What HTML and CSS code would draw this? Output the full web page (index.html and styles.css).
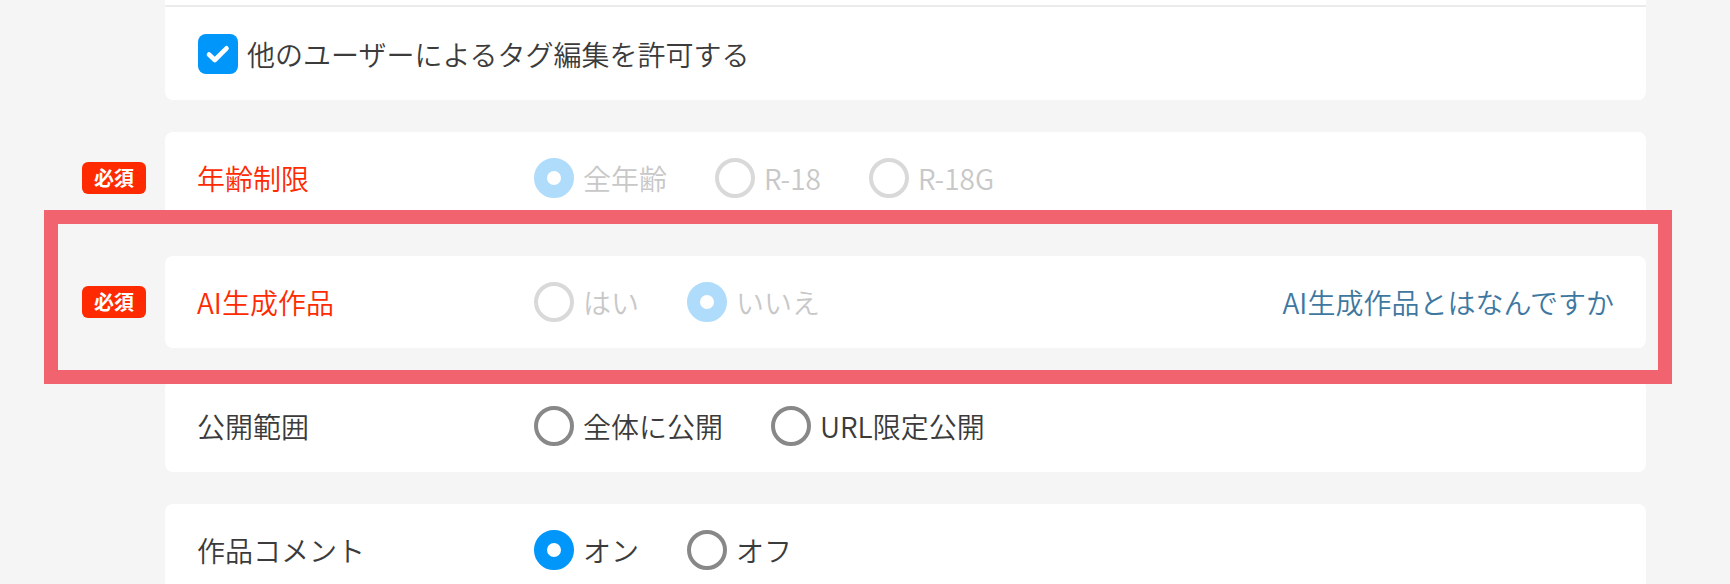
FILE: index.html
```html
<!DOCTYPE html>
<html lang="ja">
<head>
<meta charset="utf-8">
<title>作品設定</title>
<link rel="stylesheet" href="styles.css">
</head>
<body>
<div class="page">
  <div class="row">
    <div class="badge-col"></div>
    <div class="card card-top">
      <div class="divider"></div>
      <div class="check-row">
        <span class="checkbox">
          <svg width="40" height="40" viewBox="0 0 40 40"><polyline points="11,20.5 16.8,26 28.5,14.3" fill="none" stroke="#fff" stroke-width="4.6" stroke-linecap="round" stroke-linejoin="round"/></svg>
        </span>
        <span class="opt-text">他のユーザーによるタグ編集を許可する</span>
      </div>
    </div>
  </div>

  <div class="row">
    <div class="badge-col"><span class="badge">必須</span></div>
    <div class="card field">
      <div class="label required">年齢制限</div>
      <div class="options">
        <label class="opt disabled"><span class="radio on"></span><span class="opt-text">全年齢</span></label>
        <label class="opt disabled"><span class="radio"></span><span class="opt-text">R-18</span></label>
        <label class="opt disabled"><span class="radio"></span><span class="opt-text">R-18G</span></label>
      </div>
    </div>
  </div>

  <div class="row">
    <div class="badge-col"><span class="badge">必須</span></div>
    <div class="card field">
      <div class="label required">AI生成作品</div>
      <div class="options">
        <label class="opt disabled"><span class="radio"></span><span class="opt-text">はい</span></label>
        <label class="opt disabled"><span class="radio on"></span><span class="opt-text">いいえ</span></label>
      </div>
      <a class="help-link">AI生成作品とはなんですか</a>
    </div>
  </div>

  <div class="row">
    <div class="badge-col"></div>
    <div class="card field">
      <div class="label">公開範囲</div>
      <div class="options">
        <label class="opt"><span class="radio"></span><span class="opt-text">全体に公開</span></label>
        <label class="opt"><span class="radio"></span><span class="opt-text">URL限定公開</span></label>
      </div>
    </div>
  </div>

  <div class="row">
    <div class="badge-col"></div>
    <div class="card field">
      <div class="label">作品コメント</div>
      <div class="options">
        <label class="opt"><span class="radio on"></span><span class="opt-text">オン</span></label>
        <label class="opt"><span class="radio"></span><span class="opt-text">オフ</span></label>
      </div>
    </div>
  </div>

  <div class="highlight"></div>
</div>
</body>
</html>
```

FILE: styles.css
```css
html, body {
  margin: 0;
  padding: 0;
  background: #f5f5f5;
}
body {
  font-family: "Noto Sans CJK JP", "Noto Sans", sans-serif;
  font-size: 28px;
  font-weight: 350;
  color: #3b3b3b;
  height: 584px;
  overflow: hidden;
}
.page {
  position: relative;
  display: flex;
  flex-direction: column;
  gap: 32px;
  padding: 0 84px 0 82px;
}
.row {
  display: flex;
  align-items: stretch;
}
.badge-col {
  width: 83px;
  flex: 0 0 83px;
  display: flex;
  align-items: center;
}
.badge {
  display: inline-flex;
  align-items: center;
  justify-content: center;
  width: 64px;
  height: 32px;
  border-radius: 6px;
  background: #ff2a00;
  color: #ffffff;
  font-size: 20px;
  font-weight: 700;
  line-height: 1;
}
.card {
  flex: 1;
  background: #ffffff;
  border-radius: 8px;
}
.card-top {
  border-radius: 0 0 8px 8px;
  padding-top: 5px;
}
.divider {
  height: 2px;
  background: #ebebeb;
}
.check-row {
  display: flex;
  align-items: center;
  gap: 9px;
  height: 93px;
  padding-left: 33px;
}
.checkbox {
  width: 40px;
  height: 40px;
  border-radius: 8px;
  background: #0096fa;
  display: block;
}
.checkbox svg {
  display: block;
}
.field {
  display: flex;
  align-items: center;
  height: 92px;
  padding: 0 32px;
}
.label {
  width: 337px;
  flex: 0 0 337px;
  line-height: 1;
}
.label.required {
  color: #ff2a00;
}
.options {
  display: flex;
  align-items: center;
  gap: 48px;
}
.opt {
  display: flex;
  align-items: center;
  gap: 9px;
}
.opt-text {
  line-height: 1;
}
.radio {
  box-sizing: border-box;
  width: 40px;
  height: 40px;
  border-radius: 50%;
  border: 4px solid #888888;
  background: #ffffff;
  display: block;
}
.radio.on {
  border: 13.5px solid #0096fa;
}
.opt.disabled .opt-text {
  color: #c8c8c8;
}
.opt.disabled .radio {
  border-color: #d9d9d9;
}
.opt.disabled .radio.on {
  border-color: #b0dcfc;
}
.help-link {
  margin-left: auto;
  color: #3e78a0;
  line-height: 1;
  text-decoration: none;
}
.highlight {
  position: absolute;
  left: 44px;
  top: 210px;
  width: 1628px;
  height: 174px;
  box-sizing: border-box;
  border: 14px solid #f0636f;
  pointer-events: none;
}
```
